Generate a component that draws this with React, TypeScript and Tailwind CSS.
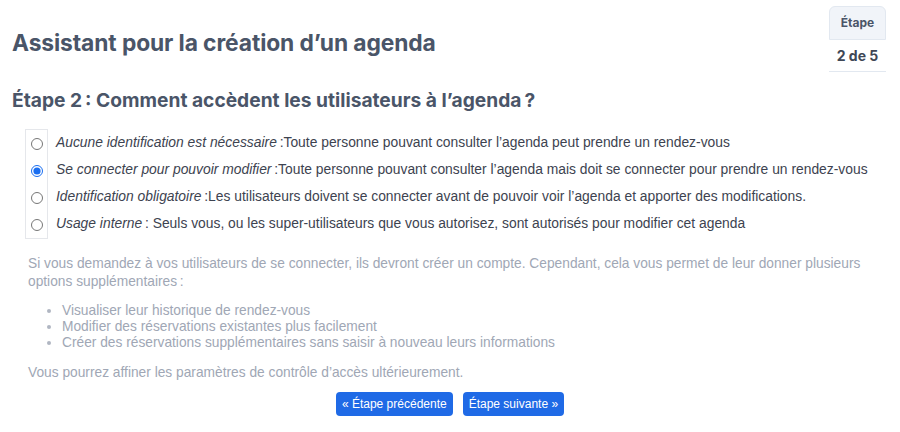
const options = [
  {
    label: "Aucune identification est nécessaire",
    text: "Toute personne pouvant consulter l’agenda peut prendre un rendez-vous",
    sep: ":",
  },
  {
    label: "Se connecter pour pouvoir modifier",
    text: "Toute personne pouvant consulter l’agenda mais doit se connecter pour prendre un rendez-vous",
    sep: ":",
  },
  {
    label: "Identification obligatoire",
    text: "Les utilisateurs doivent se connecter avant de pouvoir voir l’agenda et apporter des modifications.",
    sep: ":",
  },
  {
    label: "Usage interne",
    text: "Seuls vous, ou les super-utilisateurs que vous autorisez, sont autorisés pour modifier cet agenda",
    sep: ": ",
  },
]

const perks = [
  "Visualiser leur historique de rendez-vous",
  "Modifier des réservations existantes plus facilement",
  "Créer des réservations supplémentaires sans saisir à nouveau leurs informations",
]

export default function App() {
  return (
    <div className="w-[900px] h-[432px] bg-white px-3 font-['Liberation_Sans',Arial,sans-serif] overflow-hidden">
      {/* Header */}
      <div className="flex justify-between pt-[6px] pr-[2px]">
        <h1 className="mt-[23px] text-[22.8px] leading-7 font-bold text-[#4a5568] font-['Inter',sans-serif] tracking-[-0.1px]">
          Assistant pour la création d’un agenda
        </h1>
        <div className="w-[57px] text-center font-['Inter',sans-serif]">
          <div className="h-[34px] flex items-center justify-center bg-[#f1f4f9] border border-[#e2e8f0] rounded-t-md text-[12px] font-bold text-[#4a5568]">
            Étape
          </div>
          <div className="h-[32px] flex items-center justify-center border-b border-[#e2e8f0] text-[14px] font-bold text-[#3f4756]">
            2 de 5
          </div>
        </div>
      </div>

      <h2 className="mt-[16px] text-[19.2px] leading-6 font-bold text-[#4a5568] font-['Inter',sans-serif]">
        Étape 2&#8239;: Comment accèdent les utilisateurs à l’agenda&#8239;?
      </h2>

      {/* Options */}
      <div className="mt-[17px] ml-[13px] flex">
        <div className="w-[23px] border border-[#e5e7eb] flex flex-col">
          {options.map((o, i) => (
            <div key={i} className="h-[27px] flex items-center justify-center">
              <input
                type="radio"
                name="access"
                defaultChecked={i === 1}
                className="w-[12px] h-[12px] m-0 accent-[#1a6ef0]"
              />
            </div>
          ))}
        </div>
        <div className="pl-[8px] flex flex-col text-[13.85px] text-[#3d4350]">
          {options.map((o, i) => (
            <div key={i} className="h-[27px] flex items-center whitespace-nowrap">
              <span>
                <em>{o.label}</em>
                {"\u2009" + o.sep}
                {o.text}
              </span>
            </div>
          ))}
        </div>
      </div>

      {/* Info */}
      <div className="ml-[16px] w-[850px] text-[13.75px] text-[#a0a7b5]">
        <p className="mt-[16px] leading-[18px]">
          Si vous demandez à vos utilisateurs de se connecter, ils devront créer un compte. Cependant, cela vous
          permet de leur donner plusieurs options supplémentaires&#8239;:
        </p>
        <ul className="mt-[12px] list-disc pl-[34px] leading-4 marker:text-[#b0b6c2]">
          {perks.map((p) => (
            <li key={p}>{p}</li>
          ))}
        </ul>
        <p className="mt-[13px] leading-[18px]">
          Vous pourrez affiner les paramètres de contrôle d’accès ultérieurement.
        </p>
      </div>

      {/* Nav */}
      <div className="mt-[10px] flex justify-center gap-[10px]">
        <button className="h-[24px] px-[6px] rounded-[4px] bg-[#1f6ae6] text-white text-[12px]">
          « Étape précédente
        </button>
        <button className="h-[24px] px-[6px] rounded-[4px] bg-[#1f6ae6] text-white text-[12px]">
          Étape suivante »
        </button>
      </div>
    </div>
  )
}
